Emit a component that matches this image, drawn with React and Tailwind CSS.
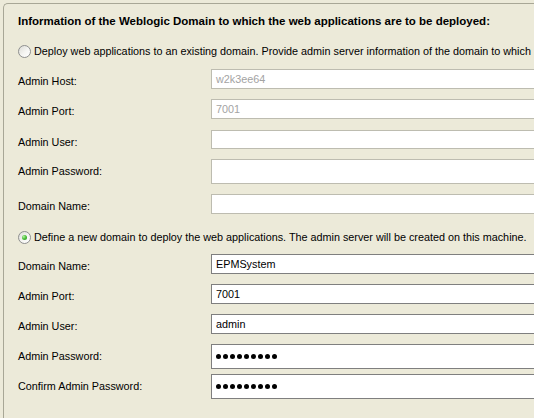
import React from "react";

function Radio({ checked }) {
  return (
    <span className="relative inline-block w-[13px] h-[13px] rounded-full border border-[#8e8f8f] bg-[linear-gradient(135deg,#dcdcd7_0%,#f5f5f2_55%,#ffffff_100%)] shrink-0">
      {checked && (
        <span className="absolute left-[3px] top-[3px] w-[5px] h-[5px] rounded-full bg-[radial-gradient(circle_at_35%_35%,#b6f0a4_0%,#4fc23d_45%,#1d8f18_100%)]" />
      )}
    </span>
  );
}

function Field({ label, value, h = "h-[20px]", disabled, dark, password, mt }) {
  return (
    <div className={`flex items-start ${mt}`}>
      <div className="w-[193px] shrink-0 h-[25px] flex items-center">{label}</div>
      <div
        className={`w-[400px] shrink-0 ${h} border bg-white flex items-center pl-[4px] ${
          dark ? "border-[#7f7f7f]" : "border-[#bdbcb0]"
        } ${disabled ? "text-[#a3a3a3]" : "text-black"}`}
      >
        {password ? (
          <span className="flex gap-[2px]">
            {Array.from({ length: 9 }).map((_, i) => (
              <span key={i} className="w-[5px] h-[5px] rounded-full bg-black" />
            ))}
          </span>
        ) : (
          value
        )}
      </div>
    </div>
  );
}

export default function App() {
  return (
    <div className="w-[534px] h-[418px] overflow-hidden bg-[#ecead9] pt-[3px] pl-[3px] font-['Liberation_Sans',Arial,sans-serif] text-[10.8px] text-black">
      <div className="h-[420px] border-t border-l border-[#a8a796] rounded-tl-[5px] pl-[14px] whitespace-nowrap">
        <div className="mt-[11px] h-[13px] flex items-center font-bold text-[11.5px]">
          Information of the Weblogic Domain to which the web applications are to be deployed:
        </div>

        <div className="mt-[16px] h-[14px] flex items-center gap-[3px]">
          <Radio />
          <span>
            Deploy web applications to an existing domain. Provide admin server information of the domain to which
          </span>
        </div>

        <Field mt="mt-[11px]" label="Admin Host:" value="w2k3ee64" disabled />
        <Field mt="mt-[5px]" label="Admin Port:" value="7001" disabled />
        <Field mt="mt-[6px]" label="Admin User:" h="h-[19px]" disabled />
        <Field mt="mt-[4px]" label="Admin Password:" h="h-[25px]" disabled />
        <Field mt="mt-[10px]" label="Domain Name:" disabled />

        <div className="mt-[11px] h-[14px] flex items-center gap-[3px]">
          <Radio checked />
          <span>
            Define a new domain to deploy the web applications. The admin server will be created on this machine.
          </span>
        </div>

        <Field mt="mt-[10px]" label="Domain Name:" value="EPMSystem" dark />
        <Field mt="mt-[5px]" label="Admin Port:" value="7001" dark />
        <Field mt="mt-[5px]" label="Admin User:" value="admin" dark />
        <Field mt="mt-[5px]" label="Admin Password:" h="h-[25px]" dark password />
        <Field mt="mt-[5px]" label="Confirm Admin Password:" h="h-[25px]" dark password />
      </div>
    </div>
  );
}
